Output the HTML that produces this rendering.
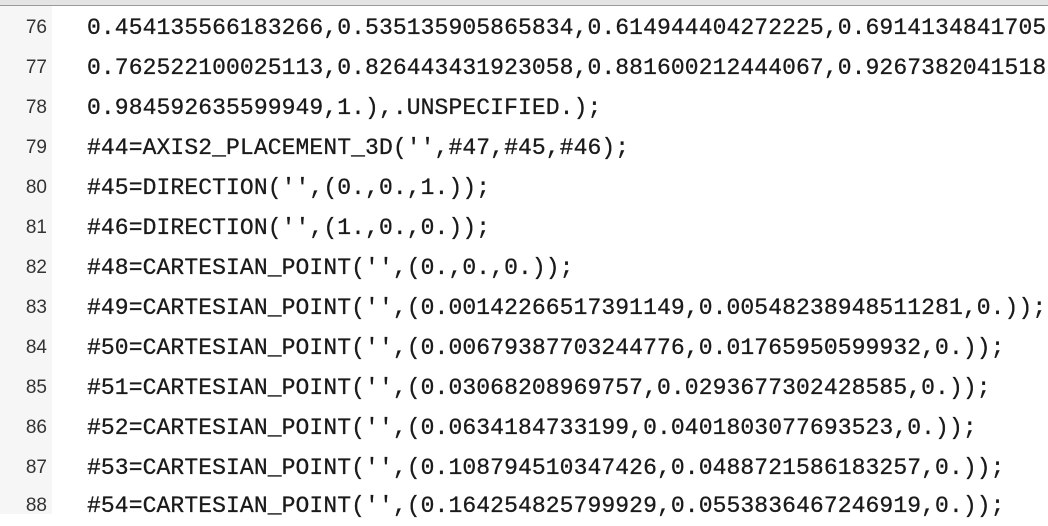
<!DOCTYPE html>
<html><head><meta charset="utf-8"><style>
html,body{margin:0;padding:0;width:1048px;height:514px;overflow:hidden;background:#fff;}
.top{position:absolute;left:0;top:0;width:1048px;height:5px;background:#e4e4e4;border-bottom:1px solid #9a9a9a;}
.gut{position:absolute;left:0;top:6px;width:52px;height:508px;background:#f6f6f6;}
.l{position:absolute;left:0;height:40px;line-height:40px;white-space:pre;font-family:"Liberation Mono",monospace;font-size:23px;color:#1a1a1a;}
.n{position:absolute;left:0;width:47px;text-align:right;font-family:"Liberation Sans",sans-serif;font-size:19px;color:#333;}
.t{position:absolute;left:87px;letter-spacing:0.1px;-webkit-text-stroke:0.3px #1a1a1a;}
</style></head><body>
<div class="top"></div><div class="gut"></div>
<div class="l" style="top:8px"><span class="n">76</span><span class="t">0.454135566183266,0.535135905865834,0.614944404272225,0.6914134841705</span></div>
<div class="l" style="top:48px"><span class="n">77</span><span class="t">0.762522100025113,0.826443431923058,0.881600212444067,0.9267382041518</span></div>
<div class="l" style="top:88px"><span class="n">78</span><span class="t">0.984592635599949,1.),.UNSPECIFIED.);</span></div>
<div class="l" style="top:128px"><span class="n">79</span><span class="t">#44=AXIS2_PLACEMENT_3D('',#47,#45,#46);</span></div>
<div class="l" style="top:168px"><span class="n">80</span><span class="t">#45=DIRECTION('',(0.,0.,1.));</span></div>
<div class="l" style="top:208px"><span class="n">81</span><span class="t">#46=DIRECTION('',(1.,0.,0.));</span></div>
<div class="l" style="top:248px"><span class="n">82</span><span class="t">#48=CARTESIAN_POINT('',(0.,0.,0.));</span></div>
<div class="l" style="top:288px"><span class="n">83</span><span class="t">#49=CARTESIAN_POINT('',(0.00142266517391149,0.00548238948511281,0.));</span></div>
<div class="l" style="top:328px"><span class="n">84</span><span class="t">#50=CARTESIAN_POINT('',(0.00679387703244776,0.01765950599932,0.));</span></div>
<div class="l" style="top:368px"><span class="n">85</span><span class="t">#51=CARTESIAN_POINT('',(0.03068208969757,0.0293677302428585,0.));</span></div>
<div class="l" style="top:408px"><span class="n">86</span><span class="t">#52=CARTESIAN_POINT('',(0.0634184733199,0.0401803077693523,0.));</span></div>
<div class="l" style="top:448px"><span class="n">87</span><span class="t">#53=CARTESIAN_POINT('',(0.108794510347426,0.0488721586183257,0.));</span></div>
<div class="l" style="top:486px"><span class="n">88</span><span class="t">#54=CARTESIAN_POINT('',(0.164254825799929,0.0553836467246919,0.));</span></div>
</body></html>
